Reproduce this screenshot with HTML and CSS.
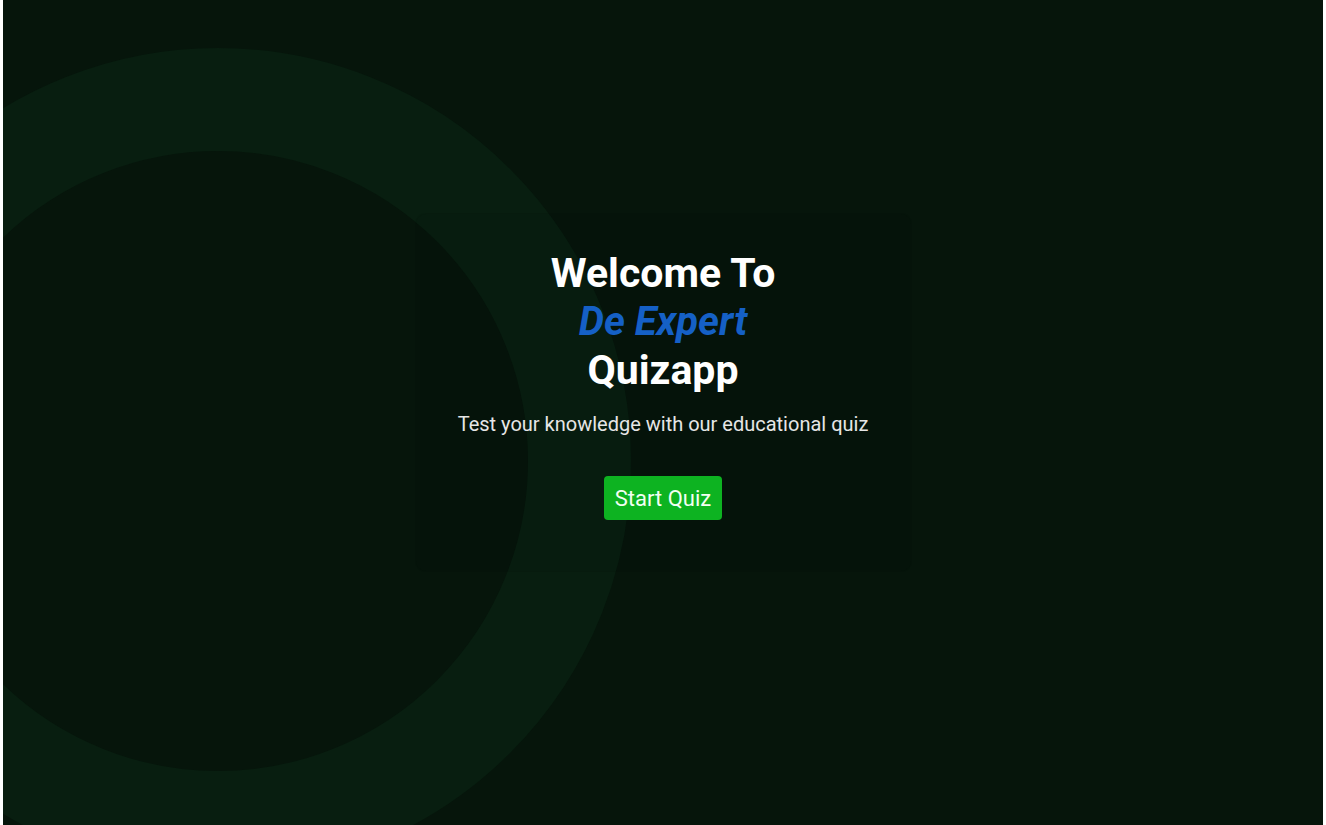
FILE: index.html
```html
<!DOCTYPE html>
<html lang="en">
<head>
<meta charset="utf-8">
<title>De Expert Quizapp</title>
<link rel="stylesheet" href="styles.css">
</head>
<body>
<main class="screen">
  <div class="ring"></div>
  <section class="card">
    <h1 class="title">Welcome To<br><span class="brand">De Expert</span><br>Quizapp</h1>
    <p class="subtitle">Test your knowledge with our educational quiz</p>
    <button class="start">Start Quiz</button>
  </section>
</main>
</body>
</html>
```
FILE: styles.css
```css
html, body {
  margin: 0;
  padding: 0;
  height: 100%;
  background: #ffffff;
}
body {
  padding: 0 3px;
  box-sizing: border-box;
  font-family: Roboto, "Liberation Sans", sans-serif;
}
.screen {
  position: relative;
  overflow: hidden;
  height: 825px;
  background: #06150b;
  display: flex;
  align-items: center;
  justify-content: center;
  padding-bottom: 40px;
  box-sizing: border-box;
}
.ring {
  position: absolute;
  left: -198px;
  top: 48px;
  width: 826px;
  height: 826px;
  box-sizing: border-box;
  border-radius: 50%;
  border: 103px solid #081e10;
}
.card {
  position: relative;
  width: 495px;
  height: 357px;
  box-sizing: border-box;
  border-radius: 10px;
  background: rgba(0, 0, 0, 0.06);
  box-shadow: 0 0 0 1px rgba(0, 0, 0, 0.08);
  display: flex;
  flex-direction: column;
  align-items: center;
  padding-top: 35px;
  text-align: center;
}
.title {
  margin: 0;
  font-size: 41px;
  line-height: 48px;
  font-weight: 700;
  color: #ffffff;
}
.brand {
  color: #1560c6;
  font-style: italic;
  font-size: 40px;
}
.subtitle {
  margin: 16px 0 0;
  font-size: 20px;
  line-height: 28px;
  color: #e6e6e6;
}
.start {
  margin-top: 38px;
  height: 44px;
  padding: 0 11px;
  border: none;
  border-radius: 4px;
  background: #0db321;
  color: #f2fff2;
  font-family: Roboto, "Liberation Sans", sans-serif;
  font-size: 22px;
}
```
